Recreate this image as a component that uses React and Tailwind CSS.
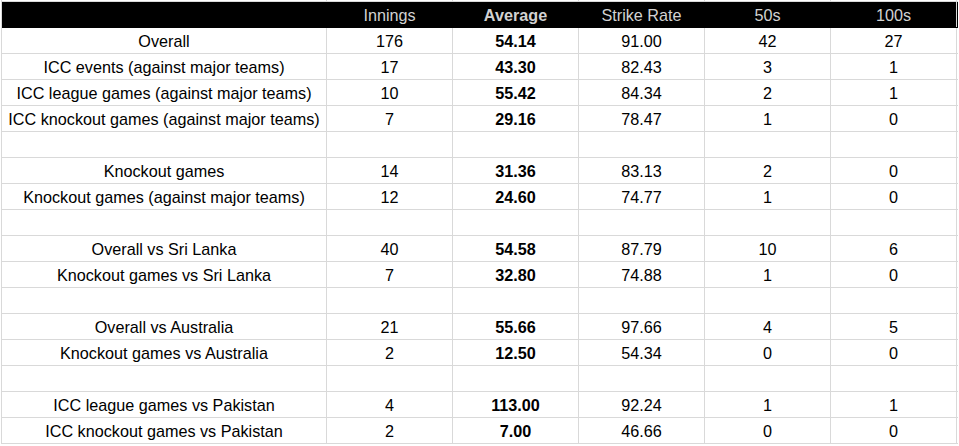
import React from "react";

const rows = [
  ["Overall", "176", "54.14", "91.00", "42", "27"],
  ["ICC events (against major teams)", "17", "43.30", "82.43", "3", "1"],
  ["ICC league games (against major teams)", "10", "55.42", "84.34", "2", "1"],
  ["ICC knockout games (against major teams)", "7", "29.16", "78.47", "1", "0"],
  null,
  ["Knockout games", "14", "31.36", "83.13", "2", "0"],
  ["Knockout games (against major teams)", "12", "24.60", "74.77", "1", "0"],
  null,
  ["Overall vs Sri Lanka", "40", "54.58", "87.79", "10", "6"],
  ["Knockout games vs Sri Lanka", "7", "32.80", "74.88", "1", "0"],
  null,
  ["Overall vs Australia", "21", "55.66", "97.66", "4", "5"],
  ["Knockout games vs Australia", "2", "12.50", "54.34", "0", "0"],
  null,
  ["ICC league games vs Pakistan", "4", "113.00", "92.24", "1", "1"],
  ["ICC knockout games vs Pakistan", "2", "7.00", "46.66", "0", "0"],
];

const header = ["", "Innings", "Average", "Strike Rate", "50s", "100s"];
const widths = ["w-[325px]", "w-[126px]", "w-[126px]", "w-[126px]", "w-[126px]", "w-[126px]"];

export default function App() {
  return (
    <div
      className="w-[959px] h-[446px] overflow-hidden bg-white text-black"
      style={{ fontFamily: '"Liberation Sans", Arial, Helvetica, sans-serif' }}
    >
      <div className="ml-px w-[957px] border-l border-[#d9d9d9]">
        <div className="flex h-[2px] border-b border-[#d9d9d9]">
          {widths.map((w, i) => (
            <div key={i} className={`${w} shrink-0 border-r border-[#d9d9d9]`} />
          ))}
        </div>
        <div className="flex h-[26px] bg-black border-b border-black">
          {header.map((h, i) => (
            <div
              key={i}
              className={`${widths[i]} shrink-0 border-r ${i === 5 ? "border-[#d9d9d9]" : "border-black"} text-center text-[16.2px] leading-[27px] text-[#d2d2d2] whitespace-nowrap ${i === 2 ? "font-bold" : ""}`}
            >
              {h}
            </div>
          ))}
        </div>
        {rows.map((r, ri) => (
          <div key={ri} className="flex h-[26px] border-b border-[#d9d9d9]">
            {widths.map((w, i) => (
              <div
                key={i}
                className={`${w} shrink-0 border-r border-[#d9d9d9] text-center text-[16.2px] leading-[27px] whitespace-nowrap ${i === 2 ? "font-bold" : ""}`}
              >
                {r ? r[i] : ""}
              </div>
            ))}
          </div>
        ))}
      </div>
    </div>
  );
}
